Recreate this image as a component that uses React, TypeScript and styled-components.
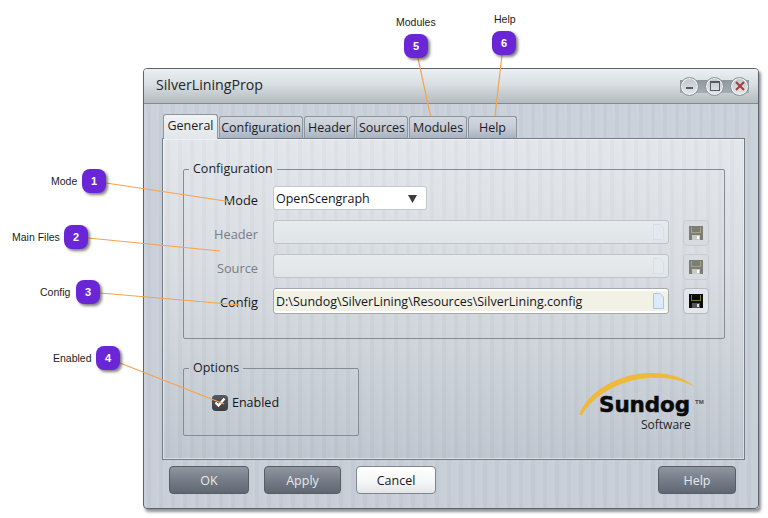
import React from "react";
import styled, { createGlobalStyle } from "styled-components";

const GlobalStyle = createGlobalStyle`
  html, body {
    margin: 0;
    background: #fff;
  }
  body {
    width: 768px;
    height: 518px;
    overflow: hidden;
    font-family: "Open Sans", "Noto Sans", sans-serif;
  }
`;

const stripes = `repeating-linear-gradient(90deg, rgba(255,255,255,0.07) 0 3px, rgba(120,130,145,0.035) 3px 7px, rgba(255,255,255,0.04) 7px 12px)`;

const Stage = styled.div`
  position: relative;
  box-sizing: border-box;
  width: 768px;
  height: 518px;
  padding: 68px 0 0 143px;
`;

const Window = styled.div`
  box-sizing: border-box;
  width: 616px;
  height: 441px;
  display: flex;
  flex-direction: column;
  border: 1px solid #5b626b;
  border-radius: 4px;
  box-shadow: 2px 3px 3px rgba(70, 75, 85, 0.6);
  background: ${stripes}, linear-gradient(180deg, #c9d0d9 0%, #c6ccd5 100%);
`;

const TitleBar = styled.div`
  flex: none;
  height: 34px;
  display: flex;
  align-items: center;
  justify-content: space-between;
  padding: 0 9px 0 12px;
  border-bottom: 1px solid #838a92;
  border-radius: 3px 3px 0 0;
  background: linear-gradient(180deg, #eaf0f3 0%, #d8dee1 45%, #b4bbbe 100%);
`;

const Title = styled.span`
  font-size: 14.2px;
  line-height: 18px;
  margin-top: -2px;
  color: #23262b;
`;

const Controls = styled.div`
  display: flex;
  align-items: center;
  height: 19px;
  gap: 6px;
  background: linear-gradient(180deg, transparent 15%, #8f979c 15%, #a7aeb2 85%, transparent 85%);
`;

const RoundButton = styled.div`
  box-sizing: border-box;
  width: 19px;
  height: 19px;
  display: flex;
  align-items: center;
  justify-content: center;
  border-radius: 50%;
  border: 1px solid #8b9298;
  box-shadow: inset 0 0 0 1px #f2f4f5;
  background: linear-gradient(180deg, #bfc5c9 0%, #e4e8ea 100%);
`;

const Content = styled.div`
  flex: 1;
  display: flex;
  flex-direction: column;
  padding: 10px 4px 0 18px;
`;

const TabRow = styled.div`
  display: flex;
  align-items: flex-end;
  gap: 1px;
  height: 25px;
  padding-left: 1px;
  position: relative;
  z-index: 1;
  margin-bottom: -1px;
`;

const Tab = styled.div<{ $active?: boolean; $width: number }>`
  box-sizing: border-box;
  width: ${(p) => p.$width}px;
  height: ${(p) => (p.$active ? 25 : 23)}px;
  display: flex;
  align-items: center;
  justify-content: center;
  padding-bottom: ${(p) => (p.$active ? 3 : 0)}px;
  font-size: 12.5px;
  color: #1b1c25;
  border: 1px solid #8d959e;
  border-bottom: ${(p) => (p.$active ? "none" : "1px solid #767e87")};
  border-radius: 3px 3px 0 0;
  background: ${(p) =>
    p.$active
      ? "linear-gradient(180deg, #f0f2f4 0%, #e2e5ea 100%)"
      : "linear-gradient(180deg, #d3d8df 0%, #c6ccd6 50%, #a8b2c0 100%)"};
`;

const Panel = styled.div`
  box-sizing: border-box;
  width: 583px;
  height: 322px;
  padding: 21px 20px 0;
  border: 1px solid #747b84;
  box-shadow: inset 0 0 0 1px rgba(255, 255, 255, 0.45);
  background: ${stripes}, linear-gradient(180deg, #e2e5ea 0%, #d8dce1 40%, #bcc4cd 100%);
`;

const Group = styled.fieldset<{ $width: number; $height: number }>`
  box-sizing: border-box;
  width: ${(p) => p.$width}px;
  height: ${(p) => p.$height}px;
  margin: 0;
  padding: 0;
  border: 1px solid #858c95;
  border-radius: 2px;
`;

const Legend = styled.legend`
  margin-left: 5px;
  padding: 0 4px;
  font-size: 12.5px;
  line-height: 18px;
  color: #1b1c25;
`;

const FormGrid = styled.div`
  display: grid;
  grid-template-columns: 75px 396px 26px;
  grid-auto-rows: 26px;
  column-gap: 14px;
  row-gap: 8px;
  margin-top: 8px;
`;

const FieldLabel = styled.div<{ $disabled?: boolean }>`
  display: flex;
  align-items: center;
  justify-content: flex-end;
  padding: 2px 1px 0 0;
  font-size: 12.8px;
  color: ${(p) => (p.$disabled ? "#777d88" : "#16171e")};
`;

const SelectBox = styled.div`
  box-sizing: border-box;
  width: 154px;
  height: 24px;
  display: flex;
  align-items: center;
  justify-content: space-between;
  padding: 1px 9px 0 2px;
  font-size: 12.5px;
  color: #14151c;
  background: #fff;
  border: 1px solid #c2c7cd;
  border-radius: 3px;
`;

const PathBox = styled.div<{ $disabled?: boolean }>`
  box-sizing: border-box;
  height: ${(p) => (p.$disabled ? 24 : 26)}px;
  display: flex;
  align-items: center;
  justify-content: space-between;
  padding: 0 4px 0 2px;
  font-size: 12.5px;
  color: #14151c;
  border-radius: 3px;
  border: 1px solid ${(p) => (p.$disabled ? "#bfc4c9" : "#a4a9af")};
  box-shadow: ${(p) => (p.$disabled ? "none" : "inset 0 -2px 0 #fff, inset 0 2px 0 #fff")};
  background: ${(p) =>
    p.$disabled ? "linear-gradient(180deg, #e8ebed 0%, #e0e5e7 100%)" : "#f1f1e6"};
`;

const SaveButton = styled.div<{ $disabled?: boolean }>`
  box-sizing: border-box;
  width: 26px;
  height: 26px;
  display: flex;
  align-items: center;
  justify-content: center;
  border-radius: 4px;
  border: 1px solid ${(p) => (p.$disabled ? "#c9cdd2" : "#b6bbc2")};
  background: ${(p) => (p.$disabled ? "#d8dbe0" : "#e3e6ea")};
`;

const BottomRow = styled.div`
  display: flex;
  justify-content: space-between;
  margin-top: 20px;
`;

const CheckRow = styled.div`
  display: flex;
  align-items: center;
  gap: 4px;
  margin: 17px 0 0 28px;
  font-size: 12.5px;
  color: #14151c;
`;

const CheckBox = styled.div`
  width: 16px;
  height: 16px;
  display: flex;
  align-items: center;
  justify-content: center;
  border-radius: 4px;
  background: linear-gradient(180deg, #55585d 0%, #3c3e42 100%);
`;

const Logo = styled.div`
  position: relative;
  width: 122px;
  height: 70px;
  margin: 13px 23px 0 0;
`;

const Swoosh = styled.svg`
  position: absolute;
  left: 0;
  top: 0;
`;

const LogoName = styled.div`
  position: absolute;
  left: 20px;
  top: 21px;
  font-family: "DejaVu Sans", sans-serif;
  font-weight: 700;
  font-size: 21.5px;
  line-height: 24px;
  letter-spacing: -0.1px;
  color: #0b0b0b;
  -webkit-text-stroke: 0.5px #0b0b0b;
`;

const LogoMark = styled.span`
  position: absolute;
  left: 116px;
  top: 27px;
  font-family: "Liberation Sans", sans-serif;
  font-size: 6px;
  font-weight: 700;
  color: #444;
`;

const LogoSub = styled.div`
  position: absolute;
  left: 62px;
  top: 45px;
  font-size: 12px;
  line-height: 16px;
  color: #22252b;
`;

const ButtonBar = styled.div`
  display: flex;
  align-items: center;
  gap: 15px;
  margin-top: 6px;
  padding: 0 18px 0 7px;
`;

const Button = styled.div<{ $light?: boolean; $width: number }>`
  box-sizing: border-box;
  width: ${(p) => p.$width}px;
  height: 28px;
  display: flex;
  align-items: center;
  justify-content: center;
  font-size: 12.5px;
  border-radius: 4px;
  color: ${(p) => (p.$light ? "#17181f" : "#e6e9ec")};
  border: 1px solid ${(p) => (p.$light ? "#7f868e" : "#565d67")};
  background: ${(p) =>
    p.$light
      ? "linear-gradient(180deg, #ffffff 0%, #f4f5f6 60%, #e3e5e8 100%)"
      : "linear-gradient(180deg, #8f96a0 0%, #737a85 55%, #5f6773 100%)"};
`;

const Spacer = styled.div`
  flex: 1;
`;

const LeaderLines = styled.svg`
  position: absolute;
  left: 0;
  top: 0;
  pointer-events: none;
`;

const Badge = styled.div<{ $x: number; $y: number }>`
  position: absolute;
  left: ${(p) => p.$x}px;
  top: ${(p) => p.$y}px;
  width: 24px;
  height: 24px;
  display: flex;
  align-items: center;
  justify-content: center;
  border-radius: 8px;
  background: #6a26d6;
  box-shadow: 2px 2px 3px rgba(40, 40, 40, 0.6);
  font-family: "Liberation Sans", sans-serif;
  font-weight: 700;
  font-size: 11px;
  color: #fff;
`;

const CalloutText = styled.div<{ $x: number; $y: number }>`
  position: absolute;
  left: ${(p) => p.$x}px;
  top: ${(p) => p.$y}px;
  font-family: "Liberation Sans", sans-serif;
  font-size: 10.5px;
  line-height: 12px;
  color: #1c1c1c;
  white-space: nowrap;
`;

const callouts = [
  { n: 1, label: "Mode", bx: 82, by: 169, tx: 51, ty: 175, line: "106,183 232,202" },
  { n: 2, label: "Main Files", bx: 64, by: 225, tx: 12, ty: 231, line: "88,238 220,251" },
  { n: 3, label: "Config", bx: 76, by: 280, tx: 40, ty: 286, line: "100,293 240,305" },
  { n: 4, label: "Enabled", bx: 96, by: 346, tx: 53, ty: 352, line: "120,363 224,404" },
  { n: 5, label: "Modules", bx: 404, by: 34, tx: 396, ty: 16, line: "418,58 432,123" },
  { n: 6, label: "Help", bx: 492, by: 31, tx: 494, ty: 13, line: "502,55 494,124" },
];

const tabs = [
  { label: "General", width: 55, active: true },
  { label: "Configuration", width: 84 },
  { label: "Header", width: 51 },
  { label: "Sources", width: 52 },
  { label: "Modules", width: 58 },
  { label: "Help", width: 49 },
];

const DocIcon = ({ muted }: { muted?: boolean }) => (
  <svg width="11" height="16" viewBox="0 0 11 16">
    <path
      d="M0.5 0.5H7L10.5 4V15.5H0.5Z"
      fill={muted ? "#e4e9ee" : "#dcebfa"}
      stroke={muted ? "#d3dfea" : "#a5c8ee"}
    />
  </svg>
);

const SaveIcon = ({ muted }: { muted?: boolean }) => {
  const shell = muted ? "#7d7d78" : "#0c0c0c";
  const trim = muted ? "#a5a57a" : "#7c7c20";
  return (
    <svg width="14" height="14" viewBox="0 0 14 14" shapeRendering="crispEdges">
      <rect width="14" height="14" fill={shell} />
      <rect x="2" y="1" width="10" height="6" fill={trim} />
      <rect x="3" y="1" width="8" height="5" fill={shell} />
      <rect x="3" y="9" width="8" height="5" fill={muted ? "#c9c9c4" : "#555"} />
      <rect x="8" y="10" width="2" height="3" fill={muted ? "#fff" : "#ddd"} />
    </svg>
  );
};

export default function App() {
  return (
    <Stage>
      <GlobalStyle />
      <Window>
        <TitleBar>
          <Title>SilverLiningProp</Title>
          <Controls>
            <RoundButton>
              <svg width="10" height="10" viewBox="0 0 10 10">
                <rect x="1" y="6" width="7" height="2" fill="#555b60" />
              </svg>
            </RoundButton>
            <RoundButton>
              <svg width="10" height="10" viewBox="0 0 10 10" shapeRendering="crispEdges">
                <path d="M0.5 0.5H9.5V9.5H0.5Z M0.5 1.5H9.5" fill="none" stroke="#555b60" />
              </svg>
            </RoundButton>
            <RoundButton>
              <svg width="10" height="10" viewBox="0 0 10 10">
                <path d="M1 1L9 9M9 1L1 9" stroke="#a33d38" strokeWidth="2" />
              </svg>
            </RoundButton>
          </Controls>
        </TitleBar>
        <Content>
          <TabRow>
            {tabs.map((t) => (
              <Tab key={t.label} $active={t.active} $width={t.width}>
                {t.label}
              </Tab>
            ))}
          </TabRow>
          <Panel>
            <Group $width={542} $height={179}>
              <Legend>Configuration</Legend>
              <FormGrid>
                <FieldLabel>Mode</FieldLabel>
                <SelectBox>
                  OpenScengraph
                  <svg width="9" height="8" viewBox="0 0 9 8">
                    <path d="M0 0H9L4.5 8Z" fill="#3a3c40" />
                  </svg>
                </SelectBox>
                <span />
                <FieldLabel $disabled>Header</FieldLabel>
                <PathBox $disabled>
                  <span />
                  <DocIcon muted />
                </PathBox>
                <SaveButton $disabled>
                  <SaveIcon muted />
                </SaveButton>
                <FieldLabel $disabled>Source</FieldLabel>
                <PathBox $disabled>
                  <span />
                  <DocIcon muted />
                </PathBox>
                <SaveButton $disabled>
                  <SaveIcon muted />
                </SaveButton>
                <FieldLabel>Config</FieldLabel>
                <PathBox>
                  D:\Sundog\SilverLining\Resources\SilverLining.config
                  <DocIcon />
                </PathBox>
                <SaveButton>
                  <SaveIcon />
                </SaveButton>
              </FormGrid>
            </Group>
            <BottomRow>
              <Group $width={176} $height={77}>
                <Legend>Options</Legend>
                <CheckRow>
                  <CheckBox>
                    <svg width="12" height="11" viewBox="0 0 12 11">
                      <path d="M1.5 5.5L4.5 8.5L10.5 1.5" fill="none" stroke="#fff" strokeWidth="2.4" />
                    </svg>
                  </CheckBox>
                  Enabled
                </CheckRow>
              </Group>
              <Logo>
                <Swoosh width="122" height="50" viewBox="0 0 122 50">
                  <path
                    d="M0 43C8 22 34 3 68 1C90 0 107 6 116 15C103 8 88 5 70 6C42 8 15 22 3 43Z"
                    fill="#efb93c"
                  />
                </Swoosh>
                <LogoName>Sundog</LogoName>
                <LogoMark>TM</LogoMark>
                <LogoSub>Software</LogoSub>
              </Logo>
            </BottomRow>
          </Panel>
          <ButtonBar>
            <Button $width={80}>OK</Button>
            <Button $width={77}>Apply</Button>
            <Button $width={80} $light>
              Cancel
            </Button>
            <Spacer />
            <Button $width={78}>Help</Button>
          </ButtonBar>
        </Content>
      </Window>
      <LeaderLines width="768" height="518" viewBox="0 0 768 518">
        {callouts.map((c) => (
          <polyline key={c.n} points={c.line} fill="none" stroke="#f8a24c" strokeWidth="1.2" />
        ))}
      </LeaderLines>
      {callouts.map((c) => (
        <React.Fragment key={c.n}>
          <CalloutText $x={c.tx} $y={c.ty}>
            {c.label}
          </CalloutText>
          <Badge $x={c.bx} $y={c.by}>
            {c.n}
          </Badge>
        </React.Fragment>
      ))}
    </Stage>
  );
}
